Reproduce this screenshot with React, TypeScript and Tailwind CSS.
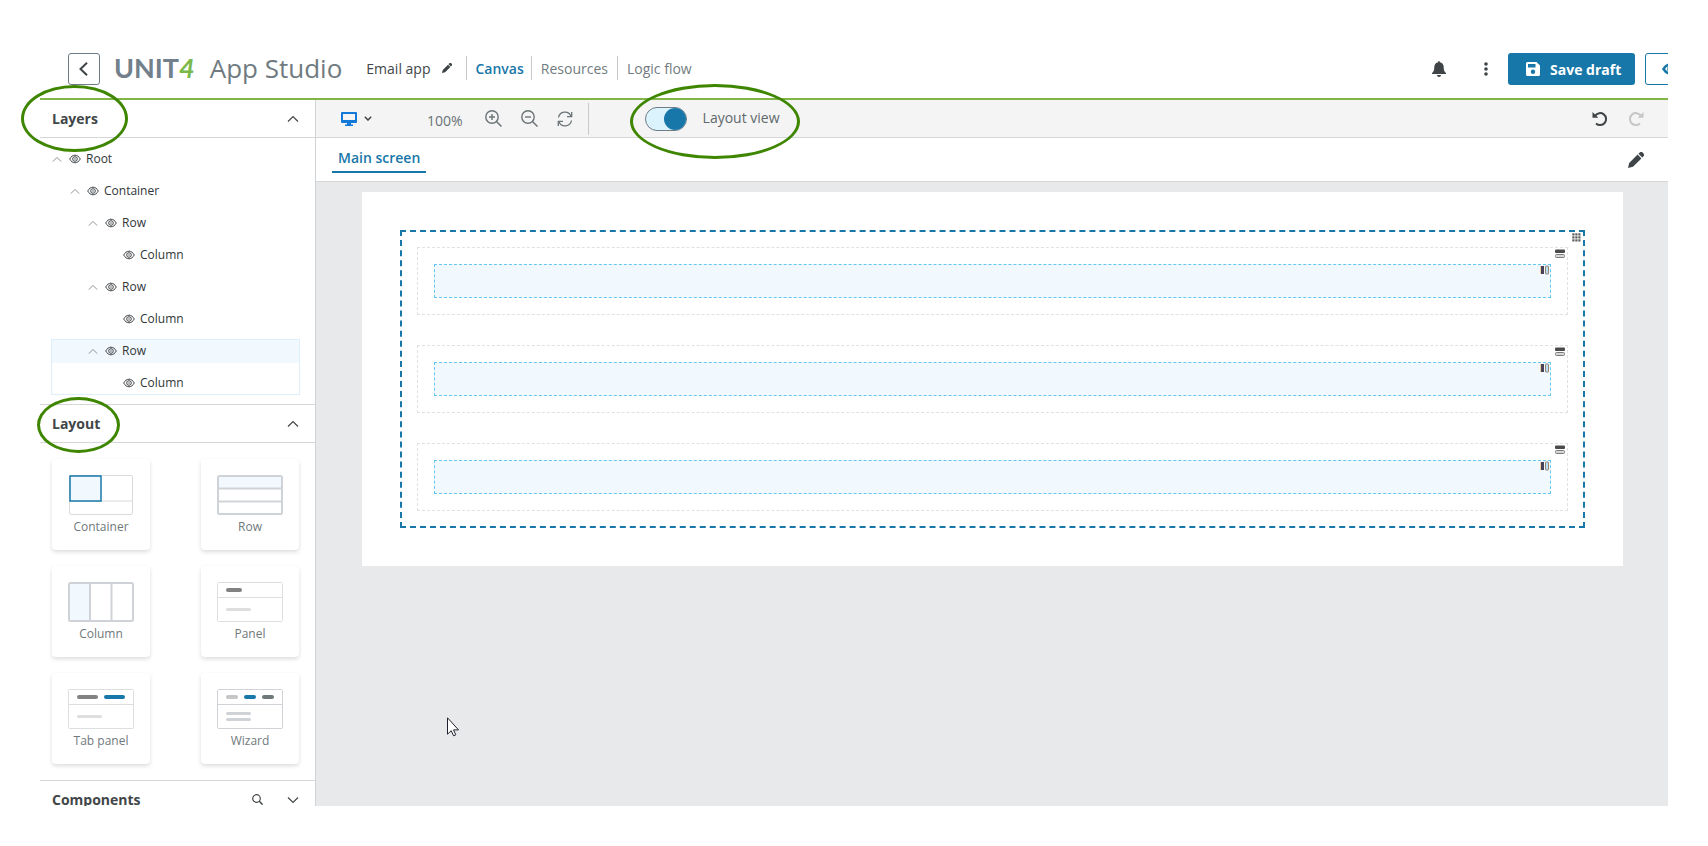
import { useState, type ReactNode } from "react";

type LayerNode = { id: string; label: string; selected?: boolean; children?: LayerNode[] };

const layers: LayerNode = {
  id: "root",
  label: "Root",
  children: [
    {
      id: "container",
      label: "Container",
      children: [
        { id: "row-1", label: "Row", children: [{ id: "col-1", label: "Column" }] },
        { id: "row-2", label: "Row", children: [{ id: "col-2", label: "Column" }] },
        { id: "row-3", label: "Row", selected: true, children: [{ id: "col-3", label: "Column" }] },
      ],
    },
  ],
};

const indents = ["pl-0", "pl-[18px]", "pl-[36px]", "pl-[54px]"];

function Chevron({ down, className }: { down?: boolean; className: string }) {
  return (
    <svg viewBox="0 0 12 8" fill="none" stroke="currentColor" className={className} aria-hidden="true">
      <path d={down ? "M1 1.5l5 5 5-5" : "M1 6.5l5-5 5 5"} strokeWidth="1.2" />
    </svg>
  );
}

function EyeIcon({ className }: { className: string }) {
  return (
    <svg viewBox="0 0 12 10" fill="none" stroke="currentColor" className={className} aria-hidden="true">
      <path d="M.7 5C2 2.6 3.8 1.2 6 1.2S10 2.6 11.300 5C10 7.400 8.200 8.800 6 8.800S2 7.400.7 5z" />
      <circle cx="6" cy="5" r="2.300" />
      <circle cx="6" cy="5" r=".7" fill="currentColor" stroke="none" />
    </svg>
  );
}

function PencilIcon({ className }: { className: string }) {
  return (
    <svg viewBox="0 0 16 16" fill="currentColor" className={className} aria-hidden="true">
      <path d="M0 16l1.200-5L9.600 2.600l3.800 3.800L5 14.800z" />
      <path d="M10.400 1.800l.9-.9a2.400 2.400 0 0 1 3.800 0 2.400 2.400 0 0 1 0 3.800l-.9.9z" />
    </svg>
  );
}

function ZoomIcon({ plus }: { plus?: boolean }) {
  return (
    <svg viewBox="0 0 17 17" fill="none" stroke="currentColor" className="size-[17px]" aria-hidden="true">
      <circle cx="7" cy="7" r="6.200" strokeWidth="1.400" />
      <path d="M11.500 11.500l5 5" strokeWidth="1.500" />
      <path d={plus ? "M4 7h6M7 4v6" : "M4 7h6"} strokeWidth="1.400" />
    </svg>
  );
}

function RefreshIcon() {
  return (
    <svg viewBox="0 0 16 16" fill="none" stroke="currentColor" strokeWidth="1.300" className="size-4" aria-hidden="true">
      <path d="M1.500 6.500A6.600 6.600 0 0 1 14 5M14.500 9.500A6.600 6.600 0 0 1 2 11" />
      <path d="M14.700 1v4.700H10M1.300 15v-4.700H6" />
    </svg>
  );
}

function TurnIcon({ redo }: { redo?: boolean }) {
  return (
    <svg viewBox="0 0 16 16" className="size-4" aria-hidden="true">
      <g transform={redo ? "translate(16 0) scale(-1 1)" : undefined}>
        <path d="M3.200 4.600A6 6 0 1 1 4 12.500" fill="none" stroke="currentColor" strokeWidth="2" />
        <path d="M.5 1v5.800h5.800z" fill="currentColor" />
      </g>
    </svg>
  );
}

function BellIcon() {
  return (
    <svg viewBox="0 0 14 16" fill="currentColor" className="h-4 w-[14px]" aria-hidden="true">
      <path d="M6.200.8a.8.8 0 0 1 1.600 0v.5c2.400.4 3.900 2.200 3.900 4.700 0 3.400.7 4.700 2.300 6V13H0v-1c1.600-1.300 2.300-2.600 2.300-6 0-2.500 1.500-4.300 3.900-4.700z" />
      <path d="M5 14h4a2 2 0 0 1-4 0z" />
    </svg>
  );
}

function LayerItem({ node, depth = 0 }: { node: LayerNode; depth?: number }) {
  return (
    <li className={node.selected ? "outline -outline-offset-1 outline-[#dceffa]" : ""}>
      <div className={`flex h-6 items-center pr-2 ${indents[depth]} ${node.selected ? "bg-[#f1f9fe]" : ""}`}>
        {node.children ? (
          <button type="button" aria-label={`Collapse ${node.label}`} className="ml-px flex w-[17px] text-[#8c9294]">
            <Chevron className="h-[7px] w-[10px]" />
          </button>
        ) : (
          <span className="w-[18px]" />
        )}
        <EyeIcon className="h-[10px] w-3 text-[#3f4447]" />
        <span className="ml-[5px] text-[12px] text-[#303638]">{node.label}</span>
      </div>
      {node.children && (
        <ul className="mt-2 flex flex-col gap-2">
          {node.children.map((child) => (
            <LayerItem key={child.id} node={child} depth={depth + 1} />
          ))}
        </ul>
      )}
    </li>
  );
}

function LayoutCard({ label, children }: { label: string; children: ReactNode }) {
  return (
    <button
      type="button"
      className="flex h-[91px] w-[98px] flex-col items-center rounded-[4px] bg-white pt-4 shadow-[0_2px_4px_rgba(0,0,0,0.14)]"
    >
      <svg viewBox="0 0 66 40" fill="none" className="h-10 w-[66px]" aria-hidden="true">
        {children}
      </svg>
      <span className="mt-[3px] text-[12px] leading-[18px] text-[#6f797c]">{label}</span>
    </button>
  );
}

function PanelHeader({ title, children }: { title: string; children: ReactNode }) {
  return (
    <div className="flex h-[37px] items-center justify-between pr-4 pl-3 text-[#414648]">
      <h2 className="text-[14px] font-bold">{title}</h2>
      <div className="flex items-center gap-6">{children}</div>
    </div>
  );
}

function Sidebar() {
  return (
    <aside className="w-[276px] shrink-0 border-r border-[#cfd3d6]">
      <section className="border-b border-[#d4d6d8]">
        <div className="border-b border-[#d4d6d8]">
          <PanelHeader title="Layers">
            <button type="button" aria-label="Collapse layers">
              <Chevron className="h-2 w-3" />
            </button>
          </PanelHeader>
        </div>
        <ul className="py-[9px] pr-[15px] pl-[11px]">
          <LayerItem node={layers} />
        </ul>
      </section>

      <section className="border-b border-[#d4d6d8]">
        <div className="border-b border-[#d4d6d8]">
          <PanelHeader title="Layout">
            <button type="button" aria-label="Collapse layout">
              <Chevron className="h-2 w-3" />
            </button>
          </PanelHeader>
        </div>
        <div className="grid grid-cols-[98px_98px] justify-between gap-y-4 py-4 pr-4 pl-3">
          <LayoutCard label="Container">
            <rect x="1.500" y=".5" width="63" height="39" rx="1.500" stroke="#d9dbdd" />
            <path d="M33 26h31M2 26h32" stroke="#d9dbdd" />
            <rect x="2" y="1" width="31" height="25" fill="#f1f9fe" stroke="#1877a9" strokeWidth="1.500" />
          </LayoutCard>
          <LayoutCard label="Row">
            <rect x="1" y="1" width="64" height="38" rx="1.500" stroke="#cfd3d7" strokeWidth="2" />
            <rect x="2" y="2" width="62" height="11" fill="#f1f9fe" />
            <path d="M1 13.500h64M1 26.500h64" stroke="#cfd3d7" strokeWidth="2" />
          </LayoutCard>
          <LayoutCard label="Column">
            <rect x="1" y="1" width="64" height="38" rx="1.500" stroke="#cfd3d7" strokeWidth="2" />
            <rect x="2" y="2" width="19" height="36" fill="#f1f9fe" />
            <path d="M22 1v38M43.500 1v38" stroke="#cfd3d7" strokeWidth="2" />
          </LayoutCard>
          <LayoutCard label="Panel">
            <rect x=".5" y=".5" width="65" height="39" rx="1" stroke="#dcdee0" />
            <path d="M1 15.500h64" stroke="#dcdee0" />
            <rect x="9" y="6" width="16" height="4" rx="2" fill="#828282" />
            <rect x="9" y="26" width="25" height="3" rx="1.500" fill="#dcdee0" />
          </LayoutCard>
          <LayoutCard label="Tab panel">
            <rect x=".5" y=".5" width="65" height="39" rx="1" stroke="#dcdee0" />
            <path d="M1 15.500h64" stroke="#dcdee0" />
            <rect x="9" y="6" width="21" height="4" rx="2" fill="#828282" />
            <rect x="36" y="6" width="21" height="4" rx="2" fill="#1877a9" />
            <rect x="9" y="26" width="25" height="3" rx="1.500" fill="#dcdee0" />
          </LayoutCard>
          <LayoutCard label="Wizard">
            <rect x=".5" y=".5" width="65" height="39" rx="1" stroke="#cfd3d7" />
            <path d="M1 15.500h64" stroke="#cfd3d7" />
            <rect x="9" y="6" width="12" height="4" rx="2" fill="#c4c6c8" />
            <rect x="27" y="6" width="12" height="4" rx="2" fill="#1877a9" />
            <rect x="45" y="6" width="12" height="4" rx="2" fill="#6f797c" />
            <rect x="9" y="23" width="25" height="3" rx="1.500" fill="#cfd3d7" />
            <rect x="9" y="29" width="25" height="3" rx="1.500" fill="#cfd3d7" />
          </LayoutCard>
        </div>
      </section>

      <PanelHeader title="Components">
        <button type="button" aria-label="Search components">
          <svg viewBox="0 0 11 11" fill="none" stroke="currentColor" strokeWidth="1.200" className="size-[11px]" aria-hidden="true">
            <circle cx="4.500" cy="4.500" r="3.800" />
            <path d="M7.300 7.300l3.300 3.300" strokeWidth="1.500" />
          </svg>
        </button>
        <button type="button" aria-label="Expand components">
          <Chevron down className="h-2 w-3" />
        </button>
      </PanelHeader>
    </aside>
  );
}

function Header() {
  return (
    <header className="flex h-[60px] shrink-0 items-center border-b-2 border-[#82b548] pl-7">
      <button
        type="button"
        aria-label="Back"
        className="flex size-8 shrink-0 items-center justify-center rounded-[3px] border border-[#6f7b85] pr-[2px] text-[#3f4447]"
      >
        <svg viewBox="0 0 9 14" fill="none" stroke="currentColor" strokeWidth="2" className="h-[14px] w-[9px]" aria-hidden="true">
          <path d="M8 .8L1.500 7 8 13.200" />
        </svg>
      </button>
      <div className="ml-[14px] flex items-center pb-[2px] whitespace-nowrap">
        <span className="font-[Lato,sans-serif] text-[27px] leading-8 font-bold text-[#71808b]">
          UNIT<span className="text-[#79b84a] italic">4</span>
        </span>
        <span className="ml-[15px] text-[26px] leading-8 text-[#6f7b80]">App Studio</span>
        <span className="ml-6 text-[14px] text-[#414648]">Email app</span>
        <button type="button" aria-label="Rename app" className="ml-3 text-[#3f4447]">
          <PencilIcon className="size-[10px]" />
        </button>
        <nav className="ml-[14px] flex items-center text-[14px] text-[#727c80]">
          <a href="#canvas" className="flex h-6 items-center border-l border-[#c6cacd] pr-[7px] pl-2 font-semibold text-[#1877a9]">
            Canvas
          </a>
          <a href="#resources" className="flex h-6 items-center border-l border-[#c6cacd] px-[9px]">
            Resources
          </a>
          <a href="#logic" className="flex h-6 items-center border-l border-[#c6cacd] pl-[9px]">
            Logic flow
          </a>
        </nav>
      </div>
      <div className="ml-auto flex shrink-0 items-center">
        <button type="button" aria-label="Notifications" className="mr-[38px] text-[#3f4447]">
          <BellIcon />
        </button>
        <button type="button" aria-label="More options" className="mr-5 text-[#3f4447]">
          <svg viewBox="0 0 4 14" fill="currentColor" className="h-[14px] w-1" aria-hidden="true">
            <circle cx="2" cy="2" r="1.800" />
            <circle cx="2" cy="7" r="1.800" />
            <circle cx="2" cy="12" r="1.800" />
          </svg>
        </button>
        <button
          type="button"
          className="flex h-8 w-[127px] items-center gap-[10px] rounded-[3px] bg-[#1877a9] pl-[18px] text-[14px] font-bold whitespace-nowrap text-white"
        >
          <svg viewBox="0 0 14 14" className="size-[14px]" aria-hidden="true">
            <path
              fillRule="evenodd"
              fill="currentColor"
              d="M1.500 0H10.500L14 3.500V12.500A1.500 1.500 0 0 1 12.500 14H1.500A1.500 1.500 0 0 1 0 12.500V1.500A1.500 1.500 0 0 1 1.500 0zM2 2v3.500h7.500V2zM7 7.500a2.200 2.200 0 1 0 0 4.400 2.200 2.200 0 1 0 0-4.400z"
            />
          </svg>
          Save draft
        </button>
        <button
          type="button"
          aria-label="Preview"
          className="-mr-[97px] ml-[10px] flex h-8 w-[120px] items-center rounded-[3px] border border-[#1877a9] pl-4 text-[#1877a9]"
        >
          <svg viewBox="0 0 18 12" fill="none" stroke="currentColor" strokeWidth="2.500" className="h-3 w-[18px]" aria-hidden="true">
            <path d="M1.500 6c2-3.300 4.300-4.700 7.500-4.700s5.500 1.400 7.500 4.700c-2 3.300-4.300 4.700-7.500 4.700S3.500 9.300 1.500 6z" />
            <circle cx="9" cy="6" r="2.500" />
          </svg>
        </button>
      </div>
    </header>
  );
}

function Toolbar() {
  const [layoutView, setLayoutView] = useState(true);

  return (
    <div className="flex h-[38px] shrink-0 items-center border-b border-[#d4d6d8] bg-[#f4f4f4] pr-6 pl-[25px] text-[#6a7376]">
      <button type="button" aria-label="Device" className="flex items-center gap-[7px]">
        <svg viewBox="0 0 16 14" className="h-[14px] w-4 text-[#1279d8]" fill="currentColor" aria-hidden="true">
          <path fillRule="evenodd" d="M1 0h14a1 1 0 0 1 1 1v9a1 1 0 0 1-1 1H1a1 1 0 0 1-1-1V1a1 1 0 0 1 1-1zm1 2v6h12V2z" />
          <path d="M6 11h4v1.500h2V14H4v-1.500h2z" />
        </svg>
        <svg viewBox="0 0 8 5" fill="none" stroke="#3f4447" strokeWidth="1.500" className="h-[5px] w-2" aria-hidden="true">
          <path d="M.8.8L4 4 7.200.8" />
        </svg>
      </button>
      <span className="mt-1 ml-[55px] text-[14px]">100%</span>
      <button type="button" aria-label="Zoom in" className="ml-[22px]">
        <ZoomIcon plus />
      </button>
      <button type="button" aria-label="Zoom out" className="ml-[19px]">
        <ZoomIcon />
      </button>
      <button type="button" aria-label="Reset zoom" className="ml-[19px]">
        <RefreshIcon />
      </button>
      <span className="ml-[15px] h-8 w-px bg-[#c6cacd]" />
      <label className="ml-14 flex items-center gap-4 text-[14px] whitespace-nowrap text-[#5f686b]">
        <input
          type="checkbox"
          role="switch"
          checked={layoutView}
          onChange={(event) => setLayoutView(event.target.checked)}
          className="flex h-6 w-[42px] appearance-none items-center rounded-full border border-[#6f7b85] bg-white before:size-[22px] before:rounded-full before:bg-[#1877a9] checked:justify-end checked:bg-[#dbf3fc]"
        />
        <span className="pb-[2px]">Layout view</span>
      </label>
      <div className="ml-auto flex items-center gap-5">
        <button type="button" aria-label="Undo" className="text-[#3f4447]">
          <TurnIcon />
        </button>
        <button type="button" aria-label="Redo" disabled className="text-[#c4c6c8]">
          <TurnIcon redo />
        </button>
      </div>
    </div>
  );
}

function CanvasRow() {
  return (
    <div className="relative border border-dashed border-[#e0e1e2] p-4">
      <svg viewBox="0 0 10 10" className="absolute top-px right-[2px] size-[10px]" aria-hidden="true">
        <rect y=".5" width="10" height="3.500" rx="1" fill="#4b4b4d" />
        <rect x=".5" y="5.500" width="9" height="3" rx="1" fill="#d6d6d6" stroke="#7c7c7c" />
      </svg>
      <div className="relative h-[34px] border border-dashed border-[#64c8f3] bg-[#f1f9fe]">
        <svg viewBox="0 0 9 10" className="absolute top-0 right-px h-[10px] w-[9px]" aria-hidden="true">
          <rect y="1" width="1" height="8" fill="#f0cfa2" />
          <rect x="1" y="1" width="3" height="8" fill="#46435a" />
          <rect x="5.500" y="1" width="3" height="8" rx=".5" fill="#b9dff6" stroke="#96846f" />
        </svg>
      </div>
    </div>
  );
}

function Workspace() {
  return (
    <main className="flex min-w-0 flex-1 flex-col bg-[#e7e9ea]">
      <Toolbar />
      <div className="flex h-11 shrink-0 items-center justify-between border-b border-[#d4d6d8] bg-white pr-6 pl-4">
        <a
          href="#main-screen"
          className="mb-2 self-end border-b-2 border-[#1877a9] px-[6px] pb-[3px] text-[14px] leading-5 font-semibold text-[#1877a9]"
        >
          Main screen
        </a>
        <button type="button" aria-label="Edit screen" className="text-[#3f4447]">
          <PencilIcon className="size-4" />
        </button>
      </div>
      <div className="pt-[10px] pr-[45px] pl-[46px]">
        <div className="bg-white p-[38px]">
          <div className="relative flex flex-col gap-[30px] border-2 border-dashed border-[#1877a9] p-[15px]">
            <svg viewBox="0 0 9 9" fill="#5c5c5e" className="absolute top-px right-[2px] size-[9px]" aria-hidden="true">
              {[0, 3, 6].map((y) => [0, 3, 6].map((x) => <rect key={`${x}-${y}`} x={x + 0.3} y={y + 0.3} width="2.200" height="2.200" />))}
            </svg>
            <CanvasRow />
            <CanvasRow />
            <CanvasRow />
          </div>
        </div>
      </div>
    </main>
  );
}

function Highlight({ className }: { className: string }) {
  return <div className={`pointer-events-none absolute rounded-[50%] border-[3px] border-[#3f8600] ${className}`} />;
}

export default function App() {
  return (
    <div className="relative h-screen bg-white p-10 font-['Open_Sans',sans-serif]">
      <div className="flex h-full flex-col overflow-hidden">
        <Header />
        <div className="flex min-h-0 flex-1">
          <Sidebar />
          <Workspace />
        </div>
      </div>

      <Highlight className="top-[85px] left-[21px] h-[67px] w-[107px]" />
      <Highlight className="top-[84px] left-[630px] h-[75px] w-[170px]" />
      <Highlight className="top-[397px] left-[37px] h-14 w-[83px]" />

      <svg viewBox="0 0 12 20" className="pointer-events-none absolute top-[717px] left-[447px] h-5 w-3" aria-hidden="true">
        <path d="M.5.8v16.400l3.700-3.500 2.400 5.100 2.200-1-2.300-4.900h5z" fill="#fff" stroke="#22222e" />
      </svg>
    </div>
  );
}
